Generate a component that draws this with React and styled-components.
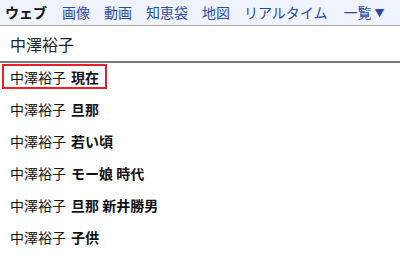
import React from 'react';
import styled, { createGlobalStyle } from 'styled-components';

const GlobalStyle = createGlobalStyle`
  html, body {
    margin: 0;
    padding: 0;
    background: #fff;
  }
  body {
    font-family: 'Noto Sans CJK JP', 'Liberation Sans', sans-serif;
  }
`;

const Page = styled.div`
  width: 400px;
  height: 258px;
  overflow: hidden;
  background: #fff;
`;

const Tabs = styled.nav`
  display: flex;
  align-items: center;
  gap: 14px;
  height: 26px;
  padding: 0 0 1px 5px;
  background: #eef3fc;
  border-bottom: 1px solid #a9a9a9;
  box-sizing: border-box;
  font-size: 14px;
  line-height: 1;
`;

const Tab = styled.span`
  color: ${(p) => (p.$active ? '#111' : '#2b4ca3')};
  font-weight: ${(p) => (p.$active ? 700 : 400)};
  white-space: nowrap;
  margin-right: ${(p) => p.$extra || '0'};
`;

const Caret = styled.span`
  font-size: 10px;
  margin-left: 3px;
  vertical-align: 1px;
`;

const Query = styled.div`
  display: flex;
  align-items: center;
  height: 37px;
  padding-left: 10px;
  border-bottom: 2px solid #7a7a7a;
  box-sizing: border-box;
  font-size: 16px;
  color: #222;
`;

const List = styled.ul`
  list-style: none;
  margin: 0;
  padding: 0 0 0 2px;
`;

const Item = styled.li`
  display: flex;
  align-items: flex-start;
  height: 32px;
  padding-top: 1px;
  box-sizing: border-box;
  font-size: 14px;
  color: #111;
  white-space: nowrap;
`;

const Box = styled.span`
  display: inline-flex;
  align-items: center;
  height: 25px;
  padding: 0 6px;
  box-sizing: border-box;
  border: ${(p) => (p.$selected ? '2px solid #e8202a' : '2px solid transparent')};
`;

const Strong = styled.b`
  font-weight: 700;
  margin-left: 5px;
`;

const tabs = ['画像', '動画', '知恵袋', '地図'];

const suggestions = ['現在', '旦那', '若い頃', 'モー娘 時代', '旦那 新井勝男', '子供'];

export default function App() {
  return (
    <Page>
      <GlobalStyle />
      <Tabs>
        <Tab $active $extra="1px">ウェブ</Tab>
        {tabs.map((t) => (
          <Tab key={t}>{t}</Tab>
        ))}
        <Tab $extra="2px">リアルタイム</Tab>
        <Tab>
          一覧<Caret>▼</Caret>
        </Tab>
      </Tabs>
      <Query>中澤裕子</Query>
      <List>
        {suggestions.map((s, i) => (
          <Item key={s}>
            <Box $selected={i === 0}>
              中澤裕子<Strong>{s}</Strong>
            </Box>
          </Item>
        ))}
      </List>
    </Page>
  );
}
